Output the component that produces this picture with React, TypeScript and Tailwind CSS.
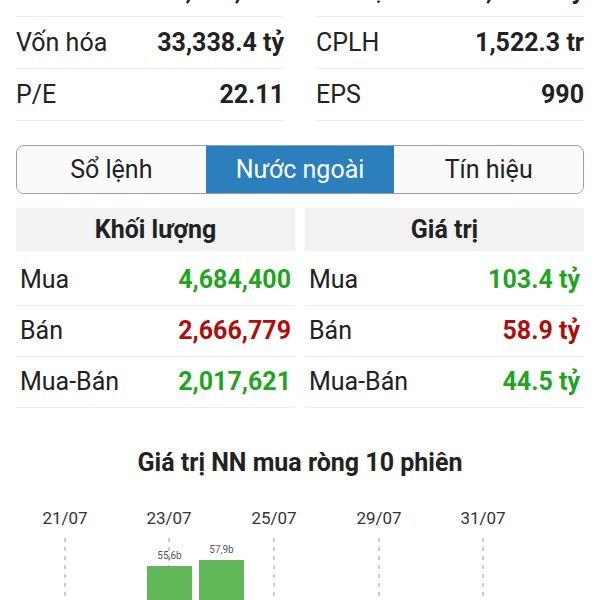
import React from 'react';

const stats = [
  [
    { label: 'KL', value: '30,575,700' },
    { label: 'Giá trị', value: '1,225.7 tỷ' },
  ],
  [
    { label: 'Vốn hóa', value: '33,338.4 tỷ' },
    { label: 'CPLH', value: '1,522.3 tr' },
  ],
  [
    { label: 'P/E', value: '22.11' },
    { label: 'EPS', value: '990' },
  ],
];

const tabs = ['Sổ lệnh', 'Nước ngoài', 'Tín hiệu'];

const volume = [
  { label: 'Mua', value: '4,684,400', up: true },
  { label: 'Bán', value: '2,666,779', up: false },
  { label: 'Mua-Bán', value: '2,017,621', up: true },
];

const amount = [
  { label: 'Mua', value: '103.4 tỷ', up: true },
  { label: 'Bán', value: '58.9 tỷ', up: false },
  { label: 'Mua-Bán', value: '44.5 tỷ', up: true },
];

const dates = [
  { x: 65, label: '21/07' },
  { x: 169, label: '23/07' },
  { x: 274, label: '25/07' },
  { x: 379, label: '29/07' },
  { x: 483, label: '31/07' },
];

const bars = [
  { x: 147, top: 72, label: '55,6b' },
  { x: 199, top: 66, label: '57,9b' },
];

function FlowTable({ title, rows }: { title: string; rows: typeof volume }) {
  return (
    <div>
      <div className="h-[43px] bg-[#f2f2f2] flex items-center justify-center text-[25px] font-bold text-[#222]">
        {title}
      </div>
      <div className="mt-[4px]">
        {rows.map((r) => (
          <div key={r.label} className="h-[51px] flex items-center justify-between px-[4px] border-b border-[#ececec]">
            <span className="text-[25px] text-[#222]">{r.label}</span>
            <span className={`text-[25px] font-bold ${r.up ? 'text-[#1fa51f]' : 'text-[#b00d0d]'}`}>{r.value}</span>
          </div>
        ))}
      </div>
    </div>
  );
}

export default function App() {
  return (
    <div className="w-[600px] h-[600px] overflow-hidden bg-white font-['Roboto',sans-serif]">
      {/* Stats */}
      <div className="-mt-[35px] px-4 grid grid-cols-2 gap-x-8">
        {stats.map((pair, i) =>
          pair.map((s) => (
            <div key={s.label + i} className="h-[52px] flex items-center justify-between border-b border-[#ececec]">
              <span className="text-[25px] text-[#222]">{s.label}</span>
              <span className="text-[25px] font-bold text-[#222]">{s.value}</span>
            </div>
          ))
        )}
      </div>

      {/* Tabs */}
      <div className="mx-4 mt-[24px] h-[49px] grid grid-cols-3 border border-[#8aa4b6] rounded-lg overflow-hidden">
        {tabs.map((t, i) => (
          <div
            key={t}
            className={`flex items-center justify-center text-[25px] ${i === 1 ? 'bg-[#2a7fbc] text-white' : 'bg-[#fafafa] text-[#222]'}`}
          >
            {t}
          </div>
        ))}
      </div>

      {/* Foreign flow */}
      <div className="mx-4 mt-[14px] grid grid-cols-2 gap-x-[10px]">
        <FlowTable title="Khối lượng" rows={volume} />
        <FlowTable title="Giá trị" rows={amount} />
      </div>

      {/* Chart */}
      <div className="mt-[36px] text-center text-[25px] font-bold text-[#222]">Giá trị NN mua ròng 10 phiên</div>
      <svg width="600" height="110" className="mt-[12px] block">
        {dates.map((d) => (
          <g key={d.label}>
            <text x={d.x} y={30} textAnchor="middle" fontSize="17" fill="#333" fontFamily="Roboto, sans-serif">
              {d.label}
            </text>
            <line x1={d.x} y1={44} x2={d.x} y2={110} stroke="#9a9a9a" strokeWidth="1" strokeDasharray="4 5" />
          </g>
        ))}
        {bars.map((b) => (
          <g key={b.label}>
            <rect x={b.x} y={b.top} width={45} height={110 - b.top} fill="#62b858" />
            <text x={b.x + 22.5} y={b.top - 7} textAnchor="middle" fontSize="10" fill="#555" fontFamily="Roboto, sans-serif">
              {b.label}
            </text>
          </g>
        ))}
      </svg>
    </div>
  );
}
